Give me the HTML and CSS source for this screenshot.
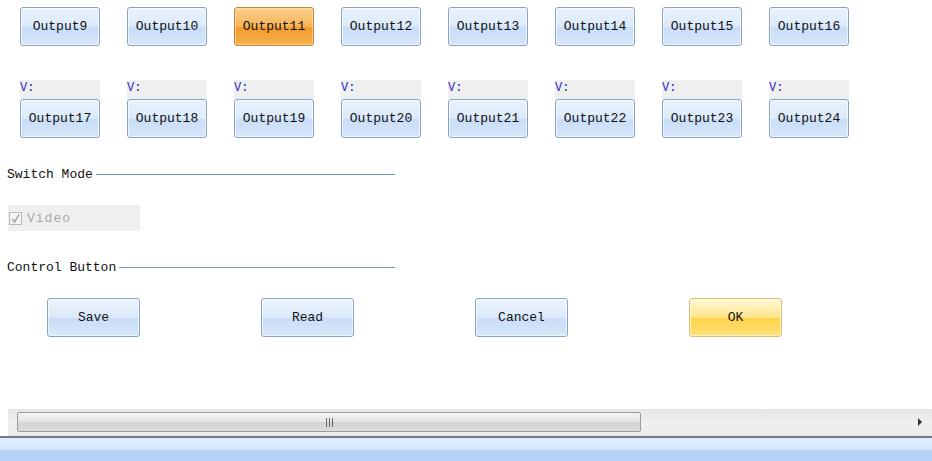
FILE: index.html
```html
<!DOCTYPE html>
<html lang="en">
<head>
    <meta charset="UTF-8">
    <title>Output Settings</title>
    <link rel="stylesheet" href="styles.css">
</head>
<body>
    <!-- Output buttons -->
    <div class="outputs">
        <div class="row first">
            <button class="out">Output9</button>
            <button class="out">Output10</button>
            <button class="out active">Output11</button>
            <button class="out">Output12</button>
            <button class="out">Output13</button>
            <button class="out">Output14</button>
            <button class="out">Output15</button>
            <button class="out">Output16</button>
        </div>
        <div class="row second">
            <div class="cell"><div class="vlabel">V:</div><button class="out">Output17</button></div>
            <div class="cell"><div class="vlabel">V:</div><button class="out">Output18</button></div>
            <div class="cell"><div class="vlabel">V:</div><button class="out">Output19</button></div>
            <div class="cell"><div class="vlabel">V:</div><button class="out">Output20</button></div>
            <div class="cell"><div class="vlabel">V:</div><button class="out">Output21</button></div>
            <div class="cell"><div class="vlabel">V:</div><button class="out">Output22</button></div>
            <div class="cell"><div class="vlabel">V:</div><button class="out">Output23</button></div>
            <div class="cell"><div class="vlabel">V:</div><button class="out">Output24</button></div>
        </div>
    </div>

    <!-- Switch Mode -->
    <div class="group-title"><span>Switch Mode</span><div class="rule"></div></div>
    <label class="check">
        <span class="box">
            <svg width="11" height="11" viewBox="0 0 11 11"><path d="M2 6 L4.5 9 L9 1.5" fill="none" stroke="#a8a8a8" stroke-width="1.6"/></svg>
        </span>
        <span class="check-text">Video</span>
    </label>

    <!-- Control Button -->
    <div class="group-title second-title"><span>Control Button</span><div class="rule"></div></div>
    <div class="controls">
        <button class="ctl">Save</button>
        <button class="ctl">Read</button>
        <button class="ctl">Cancel</button>
        <button class="ctl ok">OK</button>
    </div>

    <!-- Horizontal scrollbar -->
    <div class="hscroll">
        <div class="thumb">
            <svg width="7" height="9" viewBox="0 0 7 9"><path d="M0.5 0 V9 M3.5 0 V9 M6.5 0 V9" stroke="#666" stroke-width="1"/></svg>
        </div>
        <div class="arrow"></div>
    </div>
    <div class="statusbar"></div>
</body>
</html>
```

FILE: styles.css
```css
body {
    margin: 0;
    padding: 0;
    background-color: #fff;
    font-family: "Liberation Mono", "DejaVu Sans Mono", monospace;
    font-size: 13px;
    color: #111;
    overflow: hidden;
}

/* Output buttons */
.outputs {
    padding-left: 20px;
}

.row {
    display: flex;
    gap: 27px;
}

.row.first {
    margin-top: 7px;
}

.row.second {
    margin-top: 34px;
}

.cell {
    display: flex;
    flex-direction: column;
    width: 80px;
}

.vlabel {
    height: 19px;
    line-height: 16px;
    background-color: #efefef;
    color: #2a2ac8;
    font-size: 12px;
}

button {
    font-family: inherit;
    font-size: 13px;
    color: #111;
    cursor: pointer;
    padding: 0;
}

.out {
    width: 80px;
    height: 39px;
    border: 1px solid #8aa3c2;
    border-radius: 3px;
    background: linear-gradient(#eaf3fd, #dbe9fa 50%, #c8ddf7 52%, #d7e7fb);
    box-shadow: inset 0 0 0 1px rgba(255, 255, 255, 0.6);
}

.out.active {
    border-color: #c2863a;
    background: linear-gradient(#fbcf8a, #f8b35a 50%, #f39a2a 52%, #f6b050);
    box-shadow: inset 0 0 0 1px rgba(255, 230, 180, 0.6);
}

/* Group titles */
.group-title {
    display: flex;
    align-items: center;
    width: 395px;
    height: 16px;
    margin-top: 28px;
    padding-left: 7px;
    box-sizing: border-box;
}

.group-title span {
    white-space: nowrap;
    margin-right: 3px;
}

.rule {
    flex: 1;
    height: 1px;
    background-color: #7896b8;
}

.second-title {
    margin-top: 28px;
}

/* Checkbox */
.check {
    display: flex;
    align-items: center;
    width: 132px;
    height: 26px;
    margin-top: 23px;
    margin-left: 8px;
    background-color: #efefef;
}

.box {
    display: flex;
    align-items: center;
    justify-content: center;
    width: 11px;
    height: 11px;
    margin-left: 1px;
    border: 1px solid #b8b8b8;
    background-color: #f4f4f4;
}

.check-text {
    margin-left: 5px;
    color: #a8a8a8;
    letter-spacing: 1px;
}

/* Control buttons */
.controls {
    display: flex;
    gap: 121px;
    margin-top: 23px;
    padding-left: 47px;
}

.ctl {
    width: 93px;
    height: 39px;
    border: 1px solid #8aa3c2;
    border-radius: 3px;
    background: linear-gradient(#edf4fd, #dce9fa 50%, #c9ddf7 52%, #d8e7fb);
    box-shadow: inset 0 0 0 1px rgba(255, 255, 255, 0.6);
}

.ctl.ok {
    border-color: #d9bf7a;
    background: linear-gradient(#fff8d8, #ffe58a 50%, #ffd34a 52%, #ffe07a);
    box-shadow: inset 0 0 0 1px rgba(255, 250, 220, 0.7);
}

/* Scrollbar */
.hscroll {
    display: flex;
    align-items: center;
    height: 26px;
    margin-top: 72px;
    margin-left: 8px;
    background: linear-gradient(#e6e6e6, #f0f0f0 50%, #ececec);
    border-bottom: 1px solid #e4ecd0;
}

.thumb {
    display: flex;
    align-items: center;
    justify-content: center;
    width: 622px;
    height: 18px;
    margin-left: 9px;
    border: 1px solid #9c9c9c;
    border-radius: 2px;
    background: linear-gradient(#f4f4f4, #e4e4e4 50%, #d4d4d4 52%, #dcdcdc);
}

.arrow {
    margin-left: auto;
    margin-right: 10px;
    width: 0;
    height: 0;
    border-top: 4px solid transparent;
    border-bottom: 4px solid transparent;
    border-left: 4px solid #333;
}

.statusbar {
    height: 24px;
    border-top: 2px solid #6b7a94;
    background: linear-gradient(#e0eefd, #d4e7fb 50%, #b7d4f8 52%, #b3d1f7);
}
```
